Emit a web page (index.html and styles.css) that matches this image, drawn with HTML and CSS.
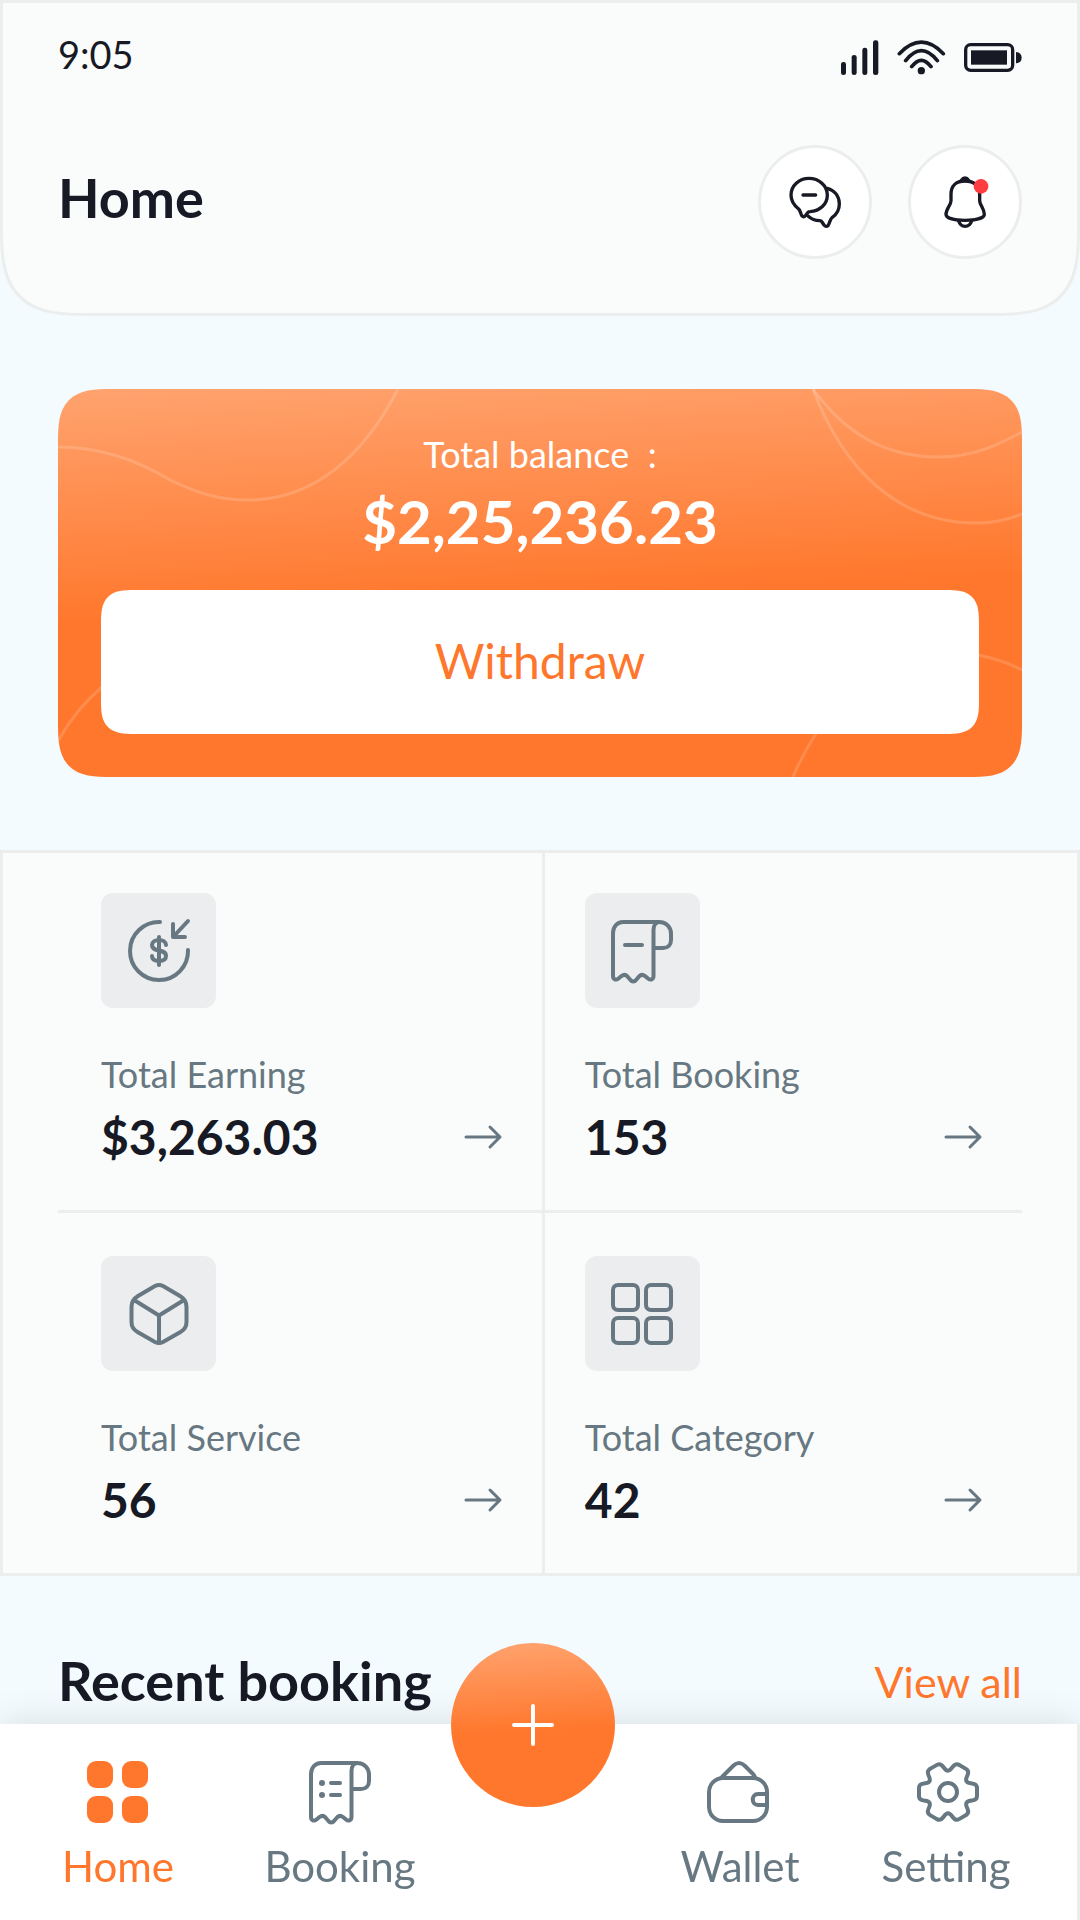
FILE: index.html
```html
<!DOCTYPE html>
<html lang="en">
<head>
<meta charset="utf-8">
<meta name="viewport" content="width=device-width, initial-scale=1">
<title>Home</title>
<link rel="stylesheet" href="styles.css">
</head>
<body>
<header class="header">
  <div class="status">
    <span class="time">9:05</span>
    <div class="status-icons">
      <svg width="38" height="35" viewBox="363 120 114 105" fill="currentColor" aria-hidden="true">
        <rect x="363" y="186" width="15" height="39" rx="7"/><rect x="395" y="165" width="15" height="60" rx="7"/><rect x="427" y="143" width="15" height="82" rx="7"/><rect x="459" y="121" width="16" height="104" rx="7"/>
      </svg>
      <svg width="49" height="35" viewBox="532 120 147 105" fill="none" stroke="currentColor" stroke-width="11" stroke-linecap="round" aria-hidden="true">
        <path d="M576 200Q605 162 634 200M558 182Q605 122 653 182M539 161Q605 92 671 161"/><circle cx="605" cy="212" r="11" fill="currentColor" stroke="none"/>
      </svg>
      <svg width="58" height="35" viewBox="735 120 174 105" fill="currentColor" aria-hidden="true">
        <rect x="740" y="134" width="141" height="77" rx="15" fill="none" stroke="currentColor" stroke-width="10"/><rect x="756" y="151" width="108" height="43"/><path d="M891 156q17 2 17 17t-17 17z"/>
      </svg>
    </div>
  </div>
  <div class="title-row">
    <h1 class="title">Home</h1>
    <div class="actions">
      <button class="round" type="button" aria-label="Messages">
        <svg width="56" height="56" viewBox="201 520 168 168" fill="none" stroke="currentColor" stroke-width="10" stroke-linecap="round" stroke-linejoin="round">
          <path d="M270 633C300 631 322 611 322 583C322 555 297 533 267 533C237 533 213 555 213 583C213 601 222 614 236 625C240 629 241 634 243 640C246 650 252 650 256 645L263 636Q266 633 270 633Z"/>
          <path d="M322 563C344 569 358 587 358 610C358 629 349 642 336 651C331 656 330 662 327 669C324 679 317 679 312 673L306 664Q304 660 299 660C286 660 273 654 263 645M249 583H287"/>
        </svg>
      </button>
      <button class="round" type="button" aria-label="Notifications">
        <svg width="56" height="56" viewBox="650 520 168 168" fill="none" stroke="currentColor" stroke-width="10" stroke-linecap="round" stroke-linejoin="round">
          <path d="M734 541C706 541 692 557 692 580V600C692 613 677 624 677 641C677 652 700 659 734 659S792 652 792 641C792 624 778 613 778 600V580C778 557 762 541 734 541Z"/>
          <path d="M722 540Q728 532 734 532T746 540Z" fill="currentColor"/>
          <path d="M715 661C719 673 726 677 734 677S750 673 754 661"/>
          <circle cx="782" cy="557" r="22" fill="#ff3d41" stroke="none"/>
        </svg>
      </button>
    </div>
  </div>
</header>

<main>
  <section class="balance">
    <svg class="waves" viewBox="0 0 964 388" preserveAspectRatio="none" fill="none" stroke="#fff" stroke-opacity=".16" stroke-width="3" aria-hidden="true">
      <path d="M0 58C42 58 77 70 114 92C140 104 160 111 190 111C255 111 305 68 340 0"/>
      <path d="M0 352Q18 320 44 298"/>
      <path d="M755 0C795 55 840 68 881 68C915 68 940 56 964 43"/>
      <path d="M755 0C785 80 840 134 918 134Q942 134 964 125"/>
      <path d="M920 266Q945 271 964 281"/>
      <path d="M735 388Q744 366 759 343"/>
    </svg>
    <p class="balance-label">Total balance&nbsp; :</p>
    <p class="balance-amount">$2,25,236.23</p>
    <button class="withdraw" type="button">Withdraw</button>
  </section>

  <section class="stats">
    <div class="stats-grid">
      <a class="stat" href="#earning">
        <span class="tile">
          <svg width="64" height="64" viewBox="0 0 64 64" aria-hidden="true"><path d="M33 3A29 29 0 1 0 61 31M61 2L47 17M46 5V18H58"/><path d="M39 26C39 23 36 21 32 21S25 23 25 26C25 34 39 29 39 37C39 41 36 42 32 42S25 41 25 37M32 18V46"/></svg>
        </span>
        <span class="stat-label">Total Earning</span>
        <span class="stat-line"><span class="stat-value">$3,263.03</span>
          <svg class="arrow" width="38" height="24" viewBox="0 0 38 24" aria-hidden="true"><path d="M2 12H35M26 2L36 12L26 22"/></svg></span>
      </a>
      <a class="stat" href="#booking">
        <span class="tile">
          <svg width="64" height="64" viewBox="0 0 64 64" aria-hidden="true"><path d="M50 3H13C7 3 3 8 3 14V57C3 60.500 6 61.500 8.500 59.500L11.500 57C13.500 55.500 15.500 55.500 17 57L20.500 61C22 63 24.500 63 26 61L29.500 57C31 55.500 33 55.500 35 57L38 59.500C40.500 61.500 43.500 60.500 43.500 57V11C43.500 6 46 3 49.500 3C56 3 61 8 61 14.500V21C61 26 58 29 53 29H43.500M15 26H32"/></svg>
        </span>
        <span class="stat-label">Total Booking</span>
        <span class="stat-line"><span class="stat-value">153</span>
          <svg class="arrow" width="38" height="24" viewBox="0 0 38 24" aria-hidden="true"><path d="M2 12H35M26 2L36 12L26 22"/></svg></span>
      </a>
      <a class="stat" href="#service">
        <span class="tile">
          <svg width="64" height="64" viewBox="0 0 64 64" aria-hidden="true"><path d="M28 4Q32 2 36 4L53 14Q59.500 18 59.500 25V40Q59.500 46.500 53.500 50L36 60Q32 62 28 60L10.500 50Q4.500 46.500 4.500 40V25Q4.500 18 11 14ZM7 18L32 33.500L57 18M32 33.500V61"/></svg>
        </span>
        <span class="stat-label">Total Service</span>
        <span class="stat-line"><span class="stat-value">56</span>
          <svg class="arrow" width="38" height="24" viewBox="0 0 38 24" aria-hidden="true"><path d="M2 12H35M26 2L36 12L26 22"/></svg></span>
      </a>
      <a class="stat" href="#category">
        <span class="tile">
          <svg width="64" height="64" viewBox="-1 0 64 64" aria-hidden="true"><rect x="2" y="3" width="25" height="25" rx="5"/><rect x="35" y="3" width="25" height="25" rx="5"/><rect x="2" y="36" width="25" height="25" rx="5"/><rect x="35" y="36" width="25" height="25" rx="5"/></svg>
        </span>
        <span class="stat-label">Total Category</span>
        <span class="stat-line"><span class="stat-value">42</span>
          <svg class="arrow" width="38" height="24" viewBox="0 0 38 24" aria-hidden="true"><path d="M2 12H35M26 2L36 12L26 22"/></svg></span>
      </a>
    </div>
  </section>

  <section class="recent">
    <h2 class="title">Recent booking</h2>
    <a class="view-all" href="#all">View all</a>
  </section>
</main>

<nav class="nav">
  <a class="nav-item active" href="#home">
    <svg width="64" height="64" viewBox="0 0 64 64" aria-hidden="true"><rect x="1" y="1" width="26" height="27" rx="9"/><rect x="36" y="1" width="26" height="27" rx="9"/><rect x="1" y="36" width="26" height="27" rx="9"/><rect x="36" y="36" width="26" height="27" rx="9"/></svg>
    Home
  </a>
  <a class="nav-item" href="#bookings">
    <svg width="64" height="64" viewBox="0 0 64 64" aria-hidden="true"><path d="M50 3H13C7 3 3 8 3 14V57C3 60.500 6 61.500 8.500 59.500L11.500 57C13.500 55.500 15.500 55.500 17 57L20.500 61C22 63 24.500 63 26 61L29.500 57C31 55.500 33 55.500 35 57L38 59.500C40.500 61.500 43.500 60.500 43.500 57V11C43.500 6 46 3 49.500 3C56 3 61 8 61 14.500V21C61 26 58 29 53 29H43.500M23 23H32M23 35H32"/><g fill="#677882" stroke="none"><circle cx="14" cy="23" r="3"/><circle cx="14" cy="35" r="3"/></g></svg>
    Booking
  </a>
  <button class="fab" type="button" aria-label="Add">
    <svg width="44" height="44" viewBox="0 0 44 44" fill="none" stroke="currentColor" stroke-width="4" stroke-linecap="round"><path d="M3 22H41M22 3V41"/></svg>
  </button>
  <a class="nav-item" href="#wallet">
    <svg width="64" height="64" viewBox="2 0 64 64" aria-hidden="true"><rect x="3" y="18" width="58" height="43" rx="14"/><path d="M16 17L27 6C31 2 35 2 39 6L47 14Q49 16 49 18M61 34H52C45 34 45 45 52 45H61"/></svg>
    Wallet
  </a>
  <a class="nav-item" href="#setting">
    <svg width="64" height="64" viewBox="-34 -32 64 64" aria-hidden="true">
      <defs><path id="tooth" d="M29 -4V4Q29 8 24 8.500C18 9 16.800 11.100 19.400 16.500Q21.400 21.100 18 23.100"/></defs>
      <use href="#tooth"/><use href="#tooth" transform="rotate(60)"/><use href="#tooth" transform="rotate(120)"/><use href="#tooth" transform="rotate(180)"/><use href="#tooth" transform="rotate(240)"/><use href="#tooth" transform="rotate(300)"/>
      <circle r="9"/>
    </svg>
    Setting
  </a>
</nav>
</body>
</html>
```

FILE: styles.css
```css
:root {
  --ink: #171924;
  --muted: #677882;
  --orange: #ff772c;
  --line: #eceeee;
  --surface: #fafcfb;
  --glow: linear-gradient(177deg, #ffa36f 0%, #ff772c 54%);
}

* { box-sizing: border-box; }

body {
  margin: 0;
  padding-bottom: 196px;
  background: #f3fbff;
  color: var(--ink);
  font-family: Lato, "Noto Sans", sans-serif;
}

h1, h2, p { margin: 0; }
a { color: inherit; text-decoration: none; }
button { border: 0; font: inherit; cursor: pointer; }
svg { display: block; flex: none; }

.header {
  padding: 32px 55px 54px;
  border: 3px solid var(--line);
  border-radius: 0 0 64px 64px;
  background: var(--surface);
}

.status {
  display: flex;
  justify-content: space-between;
  height: 40px;
}

.time {
  font-size: 38px;
  line-height: 38px;
}

.status-icons {
  display: flex;
  align-items: flex-end;
  gap: 18px;
}

.title-row {
  display: flex;
  align-items: center;
  justify-content: space-between;
  margin-top: 70px;
}

.title {
  font-size: 54px;
  font-weight: 700;
  line-height: 60px;
}

.title-row .title { padding-bottom: 8px; }

.actions {
  display: flex;
  gap: 36px;
}

.round {
  display: grid;
  place-items: center;
  width: 114px;
  height: 114px;
  padding: 0;
  border: 3px solid var(--line);
  border-radius: 50%;
  background: #fff;
  color: var(--ink);
}

.balance {
  position: relative;
  display: flex;
  flex-direction: column;
  align-items: center;
  margin: 73px 58px 0;
  padding: 43px 43px 43px;
  overflow: hidden;
  border-radius: 40px;
  background: var(--glow);
  color: #fff;
}

.waves {
  position: absolute;
  inset: 0;
  width: 100%;
  height: 100%;
}

.balance-label {
  font-size: 36px;
  line-height: 44px;
}

.balance-amount {
  margin-top: 11px;
  font-size: 60px;
  font-weight: 700;
  line-height: 68px;
}

.withdraw {
  position: relative;
  width: 100%;
  height: 144px;
  margin-top: 35px;
  padding: 0 0 4px;
  border-radius: 26px;
  background: #fff;
  color: var(--orange);
  font-size: 48px;
}

.stats {
  margin-top: 73px;
  padding: 0 55px;
  border: 3px solid var(--line);
  background: var(--surface);
}

.stats-grid {
  display: grid;
  grid-template-columns: 101fr 99fr;
}

.stat {
  display: flex;
  flex-direction: column;
  padding: 43px 40px 45px;
}

.stat:nth-child(-n+2) {
  padding-top: 40px;
  border-bottom: 3px solid var(--line);
}

.stat:nth-child(odd) {
  padding-left: 43px;
  border-right: 3px solid var(--line);
}

.tile {
  display: grid;
  place-items: center;
  width: 115px;
  height: 115px;
  border-radius: 12px;
  background: #ecedee;
}

.tile svg, .nav-item svg, .arrow {
  fill: none;
  stroke: var(--muted);
  stroke-width: 4;
  stroke-linecap: round;
  stroke-linejoin: round;
  overflow: visible;
}

.stat-label {
  margin-top: 44px;
  color: var(--muted);
  font-size: 36px;
  line-height: 44px;
}

.stat-line {
  display: flex;
  align-items: center;
  justify-content: space-between;
  margin-top: 13px;
}

.stat-value {
  font-size: 48px;
  font-weight: 700;
  line-height: 56px;
}

.arrow.arrow { stroke-width: 3; }

.recent {
  display: flex;
  align-items: center;
  justify-content: space-between;
  margin-top: 75px;
  padding: 0 58px;
}

.view-all {
  color: var(--orange);
  font-size: 43px;
}

.nav {
  position: fixed;
  right: 0;
  bottom: 0;
  left: 0;
  display: grid;
  grid-template-columns: 204fr 240fr 146fr 268fr 144fr;
  justify-items: center;
  padding: 36px 59px 30px 16px;
  border-right: 3px solid var(--line);
  background: #fff;
  box-shadow: 0 0 36px rgba(20, 20, 20, .12);
}

.nav-item {
  display: flex;
  flex-direction: column;
  align-items: center;
  gap: 18px;
  color: var(--muted);
  font-size: 42px;
  line-height: 48px;
}

.nav-item.active { color: var(--orange); }

.nav-item.active svg {
  fill: var(--orange);
  stroke: none;
}

.fab {
  display: grid;
  place-items: center;
  justify-self: center;
  width: 164px;
  height: 164px;
  margin: -117px -9px 0;
  padding: 0;
  border-radius: 50%;
  background: var(--glow);
  color: #fff;
}

/* Smoother, continuous corners where the browser can draw them. */
@supports (corner-shape: superellipse(1.6)) {
  .header, .balance, .withdraw { corner-shape: superellipse(1.6); }
  .header { border-radius: 0 0 90px 90px; }
  .balance { border-radius: 54px; }
  .withdraw { border-radius: 34px; }
}
```
